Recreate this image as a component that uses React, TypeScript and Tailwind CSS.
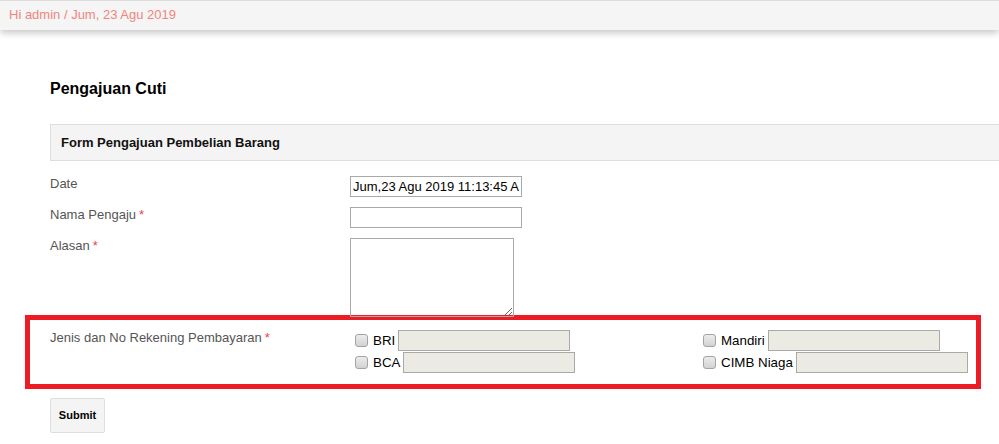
import { useState } from "react";

/** gray checkbox like the old browser one */
const Box = () => (
  <span className="inline-block w-[13px] h-[13px] rounded-[3px] border border-[#a3a3a3] bg-gradient-to-b from-[#ececec] to-[#d2d2d2] shrink-0" />
);

const BankItem = ({ name }: { name: string }) => (
  <div className="flex items-center h-[21px]">
    <Box />
    <span className="ml-[5px] mr-[3px] text-[13.33px] text-black leading-none">{name}</span>
    <input
      disabled
      className="h-[21px] w-[172px] border border-[#a9a9a9] bg-[#ebebe4] outline-none"
    />
  </div>
);

const Req = () => <span className="text-[#f0413f] ml-[3px]">*</span>;

const App = () => {
  const [date] = useState("Jum,23 Agu 2019 11:13:45 AM");

  return (
    <div className="w-[999px] h-[444px] overflow-hidden bg-white font-['Liberation_Sans',Arial,sans-serif]">
      {/* top bar */}
      <div className="h-[30px] border-t border-[#dcdcdc] bg-[#f5f5f5] shadow-[0_3px_7px_rgba(0,0,0,0.22)] flex items-center pl-[9px] pb-[2px]">
        <span className="text-[13px] text-[#ef857d]">Hi admin / Jum, 23 Agu 2019</span>
      </div>

      <h1 className="ml-[50px] mt-[50px] text-[16px] leading-[18px] font-bold text-black">Pengajuan Cuti</h1>

      <div className="ml-[50px] mt-[26px] h-[37px] border-y border-l border-[#dedede] bg-[#f4f4f4] flex items-center pl-[10px]">
        <span className="text-[13px] font-bold text-[#111]">Form Pengajuan Pembelian Barang</span>
      </div>

      <div className="mt-[15px]">
        <div className="flex items-start ml-[50px]">
          <label className="w-[300px] text-[13px] leading-[15px] text-[#555]">Date</label>
          <input
            readOnly
            value={date}
            className="h-[21px] w-[172px] border border-[#a9a9a9] px-[2px] text-[13px] text-black outline-none"
          />
        </div>

        <div className="flex items-start ml-[50px] mt-[10px]">
          <label className="w-[300px] text-[13px] leading-[15px] text-[#555]">
            Nama Pengaju
            <Req />
          </label>
          <input className="h-[21px] w-[172px] border border-[#a9a9a9] outline-none" />
        </div>

        <div className="flex items-start ml-[50px] mt-[10px]">
          <label className="w-[300px] text-[13px] leading-[15px] text-[#555]">
            Alasan
            <Req />
          </label>
          <textarea className="h-[79px] w-[164px] border border-[#a9a9a9] outline-none block" />
        </div>

        {/* highlighted row */}
        <div className="ml-[25px] -mt-[2px] w-[956px] border-[5px] border-[#ed1c24] pt-[10px] pb-[11px] flex items-start">
          <label className="w-[325px] pl-[20px] text-[13px] leading-[15px] text-[#555]">
            Jenis dan No Rekening Pembayaran
            <Req />
          </label>
          <div className="w-[348px] flex flex-col gap-[1px]">
            <BankItem name="BRI" />
            <BankItem name="BCA" />
          </div>
          <div className="flex flex-col gap-[1px]">
            <BankItem name="Mandiri" />
            <BankItem name="CIMB Niaga" />
          </div>
        </div>

        <button className="ml-[50px] mt-[9px] h-[35px] w-[55px] rounded-[2px] border border-[#dedede] bg-[#f4f4f4] text-[11px] font-bold text-black">
          Submit
        </button>
      </div>
    </div>
  );
};

export default App;
